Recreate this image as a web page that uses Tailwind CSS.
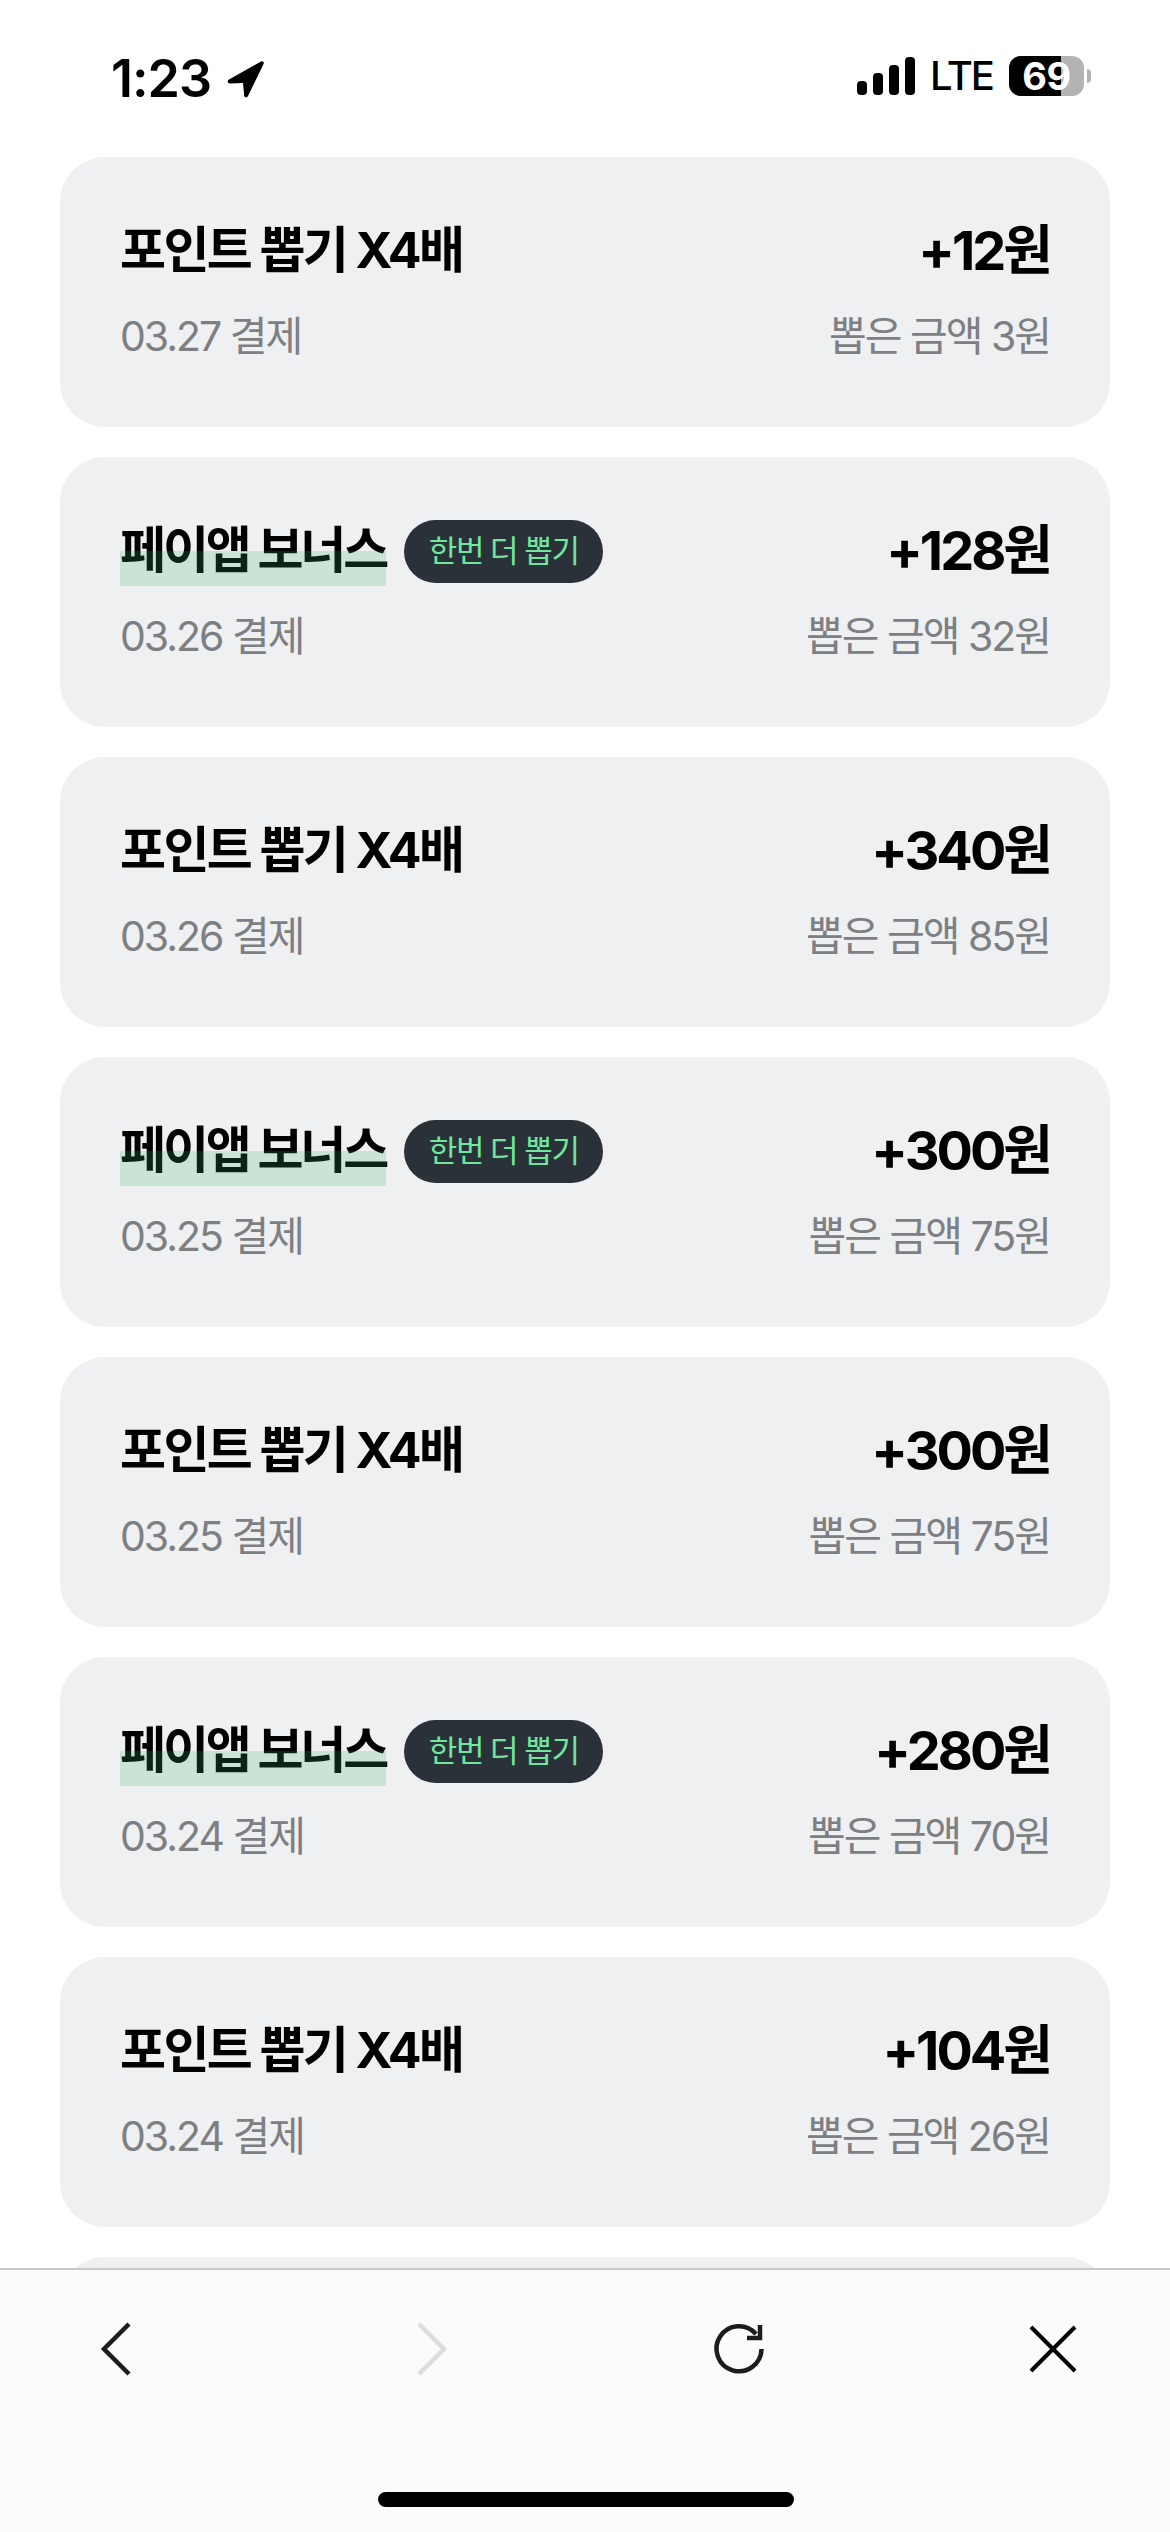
<!DOCTYPE html>
<html lang="ko">
  <head>
    <meta charset="UTF-8" />
    <meta name="viewport" content="width=device-width, initial-scale=1.0" />
    <title>포인트 내역</title>
    <script src="https://cdn.jsdelivr.net/npm/@tailwindcss/browser@4"></script>
  </head>
  <body class="bg-white font-['Inter','Noto_Sans_CJK_KR',sans-serif]">
    <div class="relative h-[2532px] w-[1170px] overflow-hidden">
      <!-- status bar -->
      <div class="flex h-[157px] items-start justify-between pl-[111px] pr-[79px] pt-[56px]">
        <div class="flex items-center gap-[15px]">
          <span class="text-[52px] leading-[46px] font-semibold tracking-[-1px] text-black">1:23</span>
          <svg class="h-[40px] w-[40px]" viewBox="0 0 40 40"><path d="M3 20.5 35 2.500c1.800-1 3.400.6 2.600 2.500L22 37c-1 2-3.600 1.600-3.800-.6L17 24 4 24.500c-2.500 0-3.200-2.700-1-4Z" fill="#000"/></svg>
        </div>
        <div class="flex items-center">
          <svg class="h-[38px] w-[58px]" viewBox="0 0 58 38" fill="#000">
            <rect x="0" y="24" width="10" height="14" rx="4"/>
            <rect x="16" y="16" width="10" height="22" rx="4"/>
            <rect x="32" y="8" width="10" height="30" rx="4"/>
            <rect x="48" y="0" width="10" height="38" rx="4"/>
          </svg>
          <span class="ml-[15px] text-[40px] leading-[38px] font-medium tracking-[-2px] text-black">LTE</span>
          <div class="relative ml-[16px] flex h-[40px] w-[75px] rounded-[12px] bg-[#b3b3b3]">
            <div class="h-full w-[52px] rounded-l-[12px] bg-black"></div>
            <span class="absolute inset-0 text-center text-[38px] leading-[40px] font-bold tracking-[-0.5px] text-white">69</span>
          </div>
          <div class="ml-[3px] h-[14px] w-[4px] rounded-r-full bg-[#b3b3b3]"></div>
        </div>
      </div>

      <!-- list -->
      <div class="flex flex-col gap-[30px] px-[60px]">
        <div class="h-[270px] rounded-[45px] bg-[#eff0f2] px-[60px] pt-[62px]">
          <div class="flex h-[63px] items-center justify-between">
            <span class="text-[50px] leading-[63px] font-bold tracking-[-2.6px] text-black">포인트 뽑기 X4배</span>
            <span class="text-[54px] leading-[63px] font-bold tracking-[-3px] text-black">+12원</span>
          </div>
          <div class="mt-[30px] flex items-center justify-between text-[41px] leading-[48px] tracking-[-2px] text-[#7d7f83]">
            <span>03.27 결제</span>
            <span>뽑은 금액 3원</span>
          </div>
        </div>

        <div class="h-[270px] rounded-[45px] bg-[#eff0f2] px-[60px] pt-[62px]">
          <div class="flex h-[63px] items-center justify-between">
            <div class="flex items-center gap-[18px]">
              <span class="relative text-[50px] leading-[63px] font-bold tracking-[-3.1px] text-black">페이앱 보너스<span class="absolute bottom-[-4px] left-0 right-0 h-[35px] bg-[#32af64]/20"></span></span>
              <span class="flex h-[63px] w-[199px] translate-y-[1px] items-center justify-center rounded-full bg-[#2b3139] text-[31px] tracking-[-1.5px] text-[#6ee89c]">한번 더 뽑기</span>
            </div>
            <span class="text-[54px] leading-[63px] font-bold tracking-[-3px] text-black">+128원</span>
          </div>
          <div class="mt-[30px] flex items-center justify-between text-[41px] leading-[48px] tracking-[-2px] text-[#7d7f83]">
            <span>03.26 결제</span>
            <span>뽑은 금액 32원</span>
          </div>
        </div>

        <div class="h-[270px] rounded-[45px] bg-[#eff0f2] px-[60px] pt-[62px]">
          <div class="flex h-[63px] items-center justify-between">
            <span class="text-[50px] leading-[63px] font-bold tracking-[-2.6px] text-black">포인트 뽑기 X4배</span>
            <span class="text-[54px] leading-[63px] font-bold tracking-[-3px] text-black">+340원</span>
          </div>
          <div class="mt-[30px] flex items-center justify-between text-[41px] leading-[48px] tracking-[-2px] text-[#7d7f83]">
            <span>03.26 결제</span>
            <span>뽑은 금액 85원</span>
          </div>
        </div>

        <div class="h-[270px] rounded-[45px] bg-[#eff0f2] px-[60px] pt-[62px]">
          <div class="flex h-[63px] items-center justify-between">
            <div class="flex items-center gap-[18px]">
              <span class="relative text-[50px] leading-[63px] font-bold tracking-[-3.1px] text-black">페이앱 보너스<span class="absolute bottom-[-4px] left-0 right-0 h-[35px] bg-[#32af64]/20"></span></span>
              <span class="flex h-[63px] w-[199px] translate-y-[1px] items-center justify-center rounded-full bg-[#2b3139] text-[31px] tracking-[-1.5px] text-[#6ee89c]">한번 더 뽑기</span>
            </div>
            <span class="text-[54px] leading-[63px] font-bold tracking-[-3px] text-black">+300원</span>
          </div>
          <div class="mt-[30px] flex items-center justify-between text-[41px] leading-[48px] tracking-[-2px] text-[#7d7f83]">
            <span>03.25 결제</span>
            <span>뽑은 금액 75원</span>
          </div>
        </div>

        <div class="h-[270px] rounded-[45px] bg-[#eff0f2] px-[60px] pt-[62px]">
          <div class="flex h-[63px] items-center justify-between">
            <span class="text-[50px] leading-[63px] font-bold tracking-[-2.6px] text-black">포인트 뽑기 X4배</span>
            <span class="text-[54px] leading-[63px] font-bold tracking-[-3px] text-black">+300원</span>
          </div>
          <div class="mt-[30px] flex items-center justify-between text-[41px] leading-[48px] tracking-[-2px] text-[#7d7f83]">
            <span>03.25 결제</span>
            <span>뽑은 금액 75원</span>
          </div>
        </div>

        <div class="h-[270px] rounded-[45px] bg-[#eff0f2] px-[60px] pt-[62px]">
          <div class="flex h-[63px] items-center justify-between">
            <div class="flex items-center gap-[18px]">
              <span class="relative text-[50px] leading-[63px] font-bold tracking-[-3.1px] text-black">페이앱 보너스<span class="absolute bottom-[-4px] left-0 right-0 h-[35px] bg-[#32af64]/20"></span></span>
              <span class="flex h-[63px] w-[199px] translate-y-[1px] items-center justify-center rounded-full bg-[#2b3139] text-[31px] tracking-[-1.5px] text-[#6ee89c]">한번 더 뽑기</span>
            </div>
            <span class="text-[54px] leading-[63px] font-bold tracking-[-3px] text-black">+280원</span>
          </div>
          <div class="mt-[30px] flex items-center justify-between text-[41px] leading-[48px] tracking-[-2px] text-[#7d7f83]">
            <span>03.24 결제</span>
            <span>뽑은 금액 70원</span>
          </div>
        </div>

        <div class="h-[270px] rounded-[45px] bg-[#eff0f2] px-[60px] pt-[62px]">
          <div class="flex h-[63px] items-center justify-between">
            <span class="text-[50px] leading-[63px] font-bold tracking-[-2.6px] text-black">포인트 뽑기 X4배</span>
            <span class="text-[54px] leading-[63px] font-bold tracking-[-3px] text-black">+104원</span>
          </div>
          <div class="mt-[30px] flex items-center justify-between text-[41px] leading-[48px] tracking-[-2px] text-[#7d7f83]">
            <span>03.24 결제</span>
            <span>뽑은 금액 26원</span>
          </div>
        </div>

        <div class="h-[270px] rounded-[45px] bg-[#eff0f2]"></div>
      </div>

      <!-- browser toolbar -->
      <div class="absolute inset-x-0 bottom-0 h-[264px] border-t-[2px] border-[#c8c9cb] bg-[#fbfbfb]">
        <div class="relative h-full">
          <div class="flex items-start pl-[98px] pt-[49px]">
            <svg class="h-[60px] w-[40px]" viewBox="0 0 40 60" fill="none" stroke="#1c1c1e" stroke-width="4.500"><path d="M31 5 6 30l25 25"/></svg>
            <svg class="ml-[273px] h-[60px] w-[40px]" viewBox="0 0 40 60" fill="none" stroke="#dcdcdc" stroke-width="4.500"><path d="m8 5 25 25L8 55"/></svg>
            <svg class="ml-[258px] h-[60px] w-[60px]" viewBox="0 0 60 60" fill="none" stroke="#1c1c1e" stroke-width="4.500"><path d="M52.500 30A22.500 22.500 0 1 1 47 15"/><path d="M38 19h13V6"/></svg>
            <svg class="ml-[254px] h-[60px] w-[60px]" viewBox="0 0 60 60" fill="none" stroke="#000" stroke-width="4"><path d="m8 8 44 44M52 8 8 52"/></svg>
          </div>
          <div class="absolute bottom-[25px] left-[378px] h-[15px] w-[416px] rounded-full bg-black"></div>
        </div>
      </div>
    </div>
  </body>
</html>
